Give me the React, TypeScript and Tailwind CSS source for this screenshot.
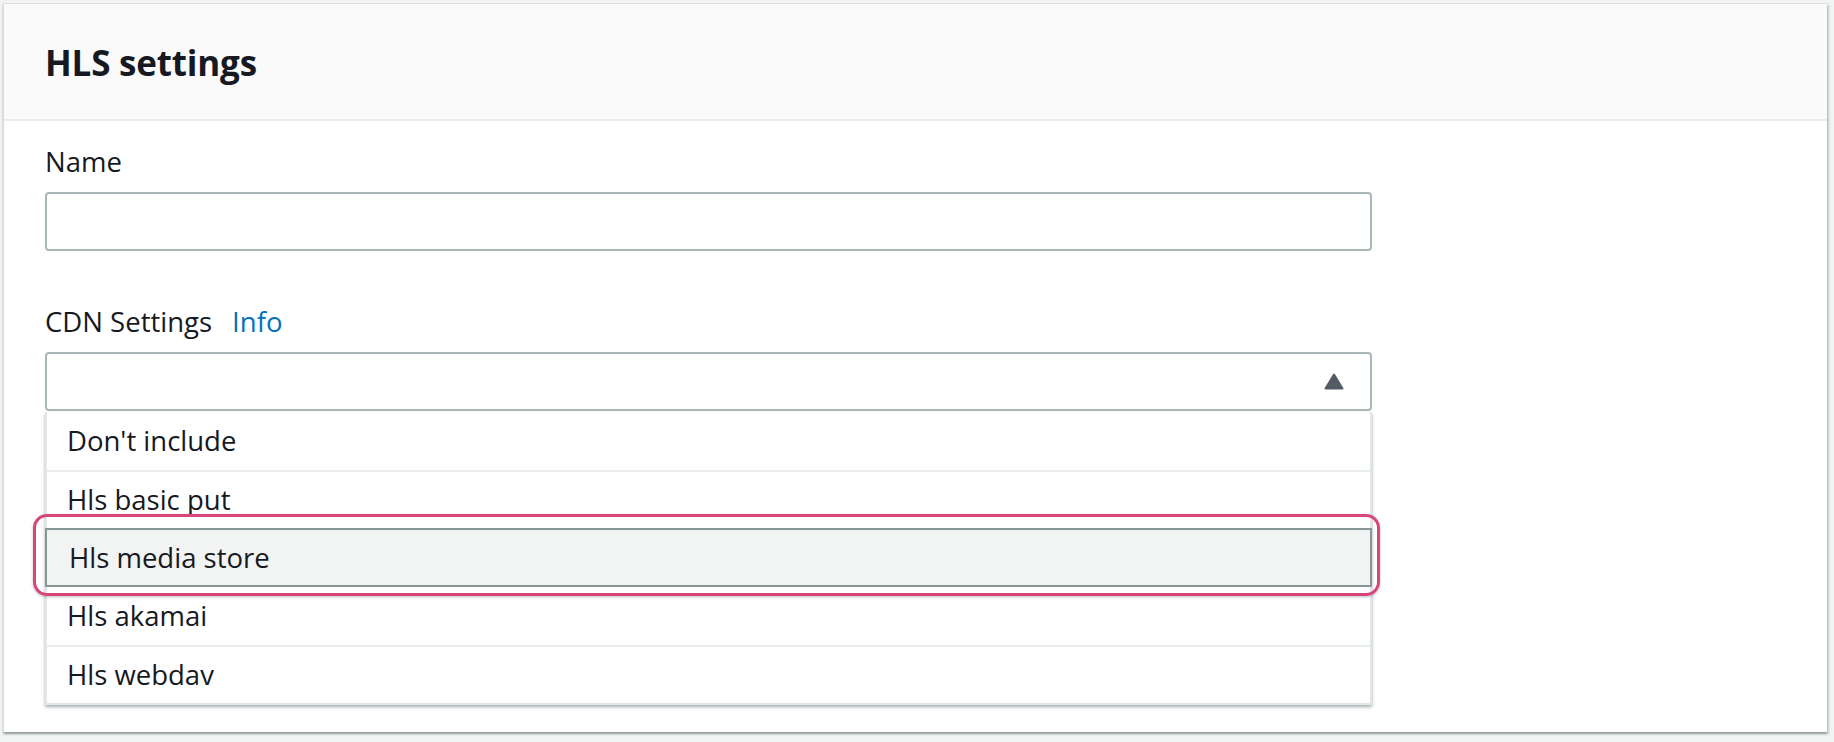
import React from 'react';

const options = ["Don't include", 'Hls basic put', 'Hls media store', 'Hls akamai', 'Hls webdav'];

const Caret = () => (
    <svg width="20" height="17" viewBox="0 0 20 17" className="block">
        <path d="M10 1.5 L18.5 15.5 L1.5 15.5 Z" fill="#545b64" stroke="#545b64" strokeWidth="2" strokeLinejoin="round" />
    </svg>
);

export default function App() {
    const selected = 'Hls media store';

    return (
        <div className="min-h-screen bg-[#f2f3f3] pt-[3px] pl-[3px] pr-[7px] pb-[9px] font-['Open_Sans',sans-serif] text-[#16191f]">
            <div className="bg-white border-l border-t border-[#dcdfe0] shadow-[0_2px_2px_0_rgba(0,28,36,0.3),2px_2px_2px_0_rgba(0,28,36,0.15)]">
                {/* header */}
                <div className="h-[117px] bg-[#fafafa] border-b-2 border-[#eaeded] pl-[41px] pt-[37px]">
                    <h2 className="text-[35px] leading-[44px] font-bold tracking-[-0.2px]">HLS settings</h2>
                </div>

                <div className="pt-[23px] pl-[41px] pb-[27px]">
                    {/* name */}
                    <label className="block text-[27.5px] leading-[36px]">Name</label>
                    <div className="mt-[12px] w-[1327px] h-[59px] rounded-[4px] border-2 border-[#aab7b8] bg-white" />

                    {/* cdn */}
                    <div className="mt-[53px] flex items-center gap-[20px] text-[27.5px] leading-[36px]">
                        <span>CDN Settings</span>
                        <span className="text-[#0073bb]">Info</span>
                    </div>
                    <div className="mt-[12px] w-[1327px]">
                        <div className="h-[59px] rounded-[4px] border-2 border-[#aab7b8] bg-white flex items-center justify-end pr-[26px]">
                            <Caret />
                        </div>
                        <ul className="mt-[1px] bg-white border-x-2 border-b-2 border-[#e3e6e6] shadow-[0_2px_3px_0_rgba(0,28,36,0.35)]">
                            {options.map((o, i) => {
                                const isSel = o === selected;
                                return (
                                    <li key={o} className="relative">
                                        {isSel ? (
                                            <>
                                                <div className="-mx-[2px] h-[59px] bg-[#f2f3f3] border-2 border-[#879596] flex items-center pl-[22px] text-[27.5px]">
                                                    {o}
                                                </div>
                                                <div className="absolute -left-[14px] -right-[10px] -top-[14px] -bottom-[9px] rounded-[14px] border-[3px] border-[#d6467a] shadow-[0_1px_3px_rgba(0,0,0,0.25)] pointer-events-none" />
                                            </>
                                        ) : (
                                            <div
                                                className={
                                                    'h-[58px] flex items-center pl-[20px] text-[27.5px] ' +
                                                    (i > 0 && options[i - 1] !== selected ? 'border-t-2 border-[#eaeded]' : '')
                                                }
                                            >
                                                {o}
                                            </div>
                                        )}
                                    </li>
                                );
                            })}
                        </ul>
                    </div>
                </div>
            </div>
        </div>
    );
}
